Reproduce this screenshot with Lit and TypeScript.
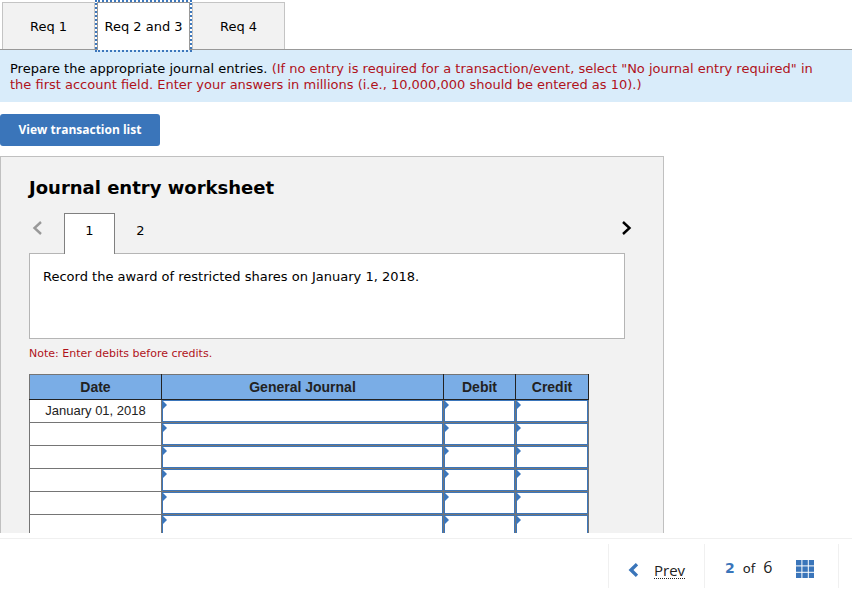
import { LitElement, html, css, svg } from "lit";
import { customElement, state } from "lit/decorators.js";

const dates = ["January 01, 2018", "", "", "", "", "", ""];
const entryColumns = ["General Journal", "Debit", "Credit"];

@customElement("journal-table")
class JournalTable extends LitElement {
  static styles = css`
    :host { display: block; }
    table {
      width: 100%;
      border-collapse: collapse;
      table-layout: fixed;
      background: #fff;
      font: 13px/16px "Liberation Sans", Arial, sans-serif;
      color: #222;
    }
    th, td { padding: 0; border: 1px solid #757575; text-align: center; }
    th {
      height: 24px;
      background: #7aade6;
      border-color: #222;
      border-top-color: #757575;
      font-size: 14px;
    }
    th:first-child { border-left-color: #757575; }
    td { height: 22px; }
    .date { width: 132px; }
    .amount { width: 72px; }
    .credit { width: 73px; }
    .cell { position: relative; height: 22px; }
    .cell::before {
      content: "";
      position: absolute;
      left: 1px;
      top: 1px;
      border: 4px solid transparent;
      border-left-color: #3b76bb;
      border-right-width: 0;
    }
    input {
      display: block;
      box-sizing: border-box;
      width: 100%;
      height: 22px;
      margin: 0;
      padding: 0 6px;
      border: 1px solid #3b76bb;
      border-radius: 0;
      background: #fff;
      font: inherit;
    }
  `;
  render() {
    return html`<table>
      <colgroup><col class="date" /><col /><col class="amount" /><col class="credit" /></colgroup>
      <thead><tr><th scope="col">Date</th>${entryColumns.map((c) => html`<th scope="col">${c}</th>`)}</tr></thead>
      <tbody>
        ${dates.map((date, i) => html`<tr>
          <td>${date}</td>
          ${entryColumns.map((c) => html`<td><div class="cell"><input type="text" aria-label="${c}, row ${i + 1}" /></div></td>`)}
        </tr>`)}
      </tbody>
    </table>`;
  }
}

@customElement("app-root")
class AppRoot extends LitElement {
  @state() tab = 1;
  @state() entry = 1;

  static styles = css`
    :host {
      display: flex;
      flex-direction: column;
      height: 100vh;
      background: #fff;
      color: #000;
      font: 13px/16px Verdana, "DejaVu Sans", sans-serif;
    }
    button { margin: 0; padding: 0; border: 0; background: none; font: inherit; color: inherit; }
    h1, p { margin: 0; }
    .work { flex: 1; min-height: 0; overflow: hidden; }
    .tabs { display: flex; gap: 2px; padding: 2px 2px 0; border-bottom: 1px solid #999; }
    .tab {
      width: 93px;
      height: 47px;
      padding-top: 2px;
      border: 1px solid #c4c4c4;
      border-bottom: 0;
      background: #f2f2f2;
      white-space: nowrap;
    }
    .tab.on {
      position: relative;
      height: 48px;
      margin-bottom: -1px;
      padding-top: 0;
      border-color: #999;
      background: #fff;
      outline: 2px dotted #3b76bb;
    }
    .banner { padding: 11px 20px 9px 10px; background: #d9ecfa; }
    .red { color: #b0121b; }
    .list {
      display: block;
      width: 160px;
      height: 32px;
      margin: 12px 0 10px;
      border-radius: 3px;
      background: #3a75ba;
      color: #fff;
      font: bold 12px/16px "Open Sans", sans-serif;
    }
    .sheet {
      box-sizing: border-box;
      max-width: 664px;
      padding: 20px 28px;
      border: 1px solid #c0c0c0;
      background: #f2f2f2;
    }
    h1 { font-size: 18px; line-height: 22px; }
    .pages { display: flex; align-items: flex-start; margin-top: 14px; }
    .arrow { width: 16px; height: 30px; }
    .arrow svg { display: block; margin: auto; }
    .page { box-sizing: border-box; width: 51px; height: 40px; padding-bottom: 5px; }
    .page.first { margin-left: 19px; }
    .page.on {
      position: relative;
      height: 41px;
      margin-bottom: -1px;
      padding-bottom: 6px;
      border: 1px solid #808080;
      border-bottom: 0;
      background: #fff;
    }
    .next { margin-left: auto; }
    .text {
      box-sizing: border-box;
      max-width: 596px;
      min-height: 86px;
      padding: 15px 13px;
      border: 1px solid #b5b5b5;
      background: #fff;
    }
    .note { margin: 7px 0 12px; font-size: 11px; }
    journal-table { max-width: 560px; }
    .foot {
      display: flex;
      justify-content: flex-end;
      margin-top: 5px;
      padding: 5px 13px 6px 0;
      border-top: 1px solid #f0f0f0;
      color: #222;
    }
    .box {
      display: flex;
      align-items: center;
      box-sizing: border-box;
      height: 44px;
      border-left: 1px solid #f0f0f0;
    }
    .prevbox { width: 96px; padding: 8px 0 0 19px; }
    .countbox { width: 135px; padding: 2px 0 0 20px; border-right: 1px solid #f0f0f0; }
    .prev { display: flex; align-items: center; gap: 16px; color: inherit; text-decoration: none; }
    .prev span { border-bottom: 1px dotted #222; font: 15px/16px "Open Sans", sans-serif; }
    .count { display: flex; align-items: baseline; gap: 8px; }
    .count b { color: #3a75ba; font-size: 14px; }
    .count i { font: 16px/20px "Open Sans", sans-serif; }
    .grid { margin: 4px 0 0 24px; }
    .grid svg { display: block; }
  `;

  chevron(path: string, color: string) {
    return html`<svg width="10" height="14" viewBox="0 0 10 14" aria-hidden="true">
      <path d=${path} fill="none" stroke=${color} stroke-width="2.4" />
    </svg>`;
  }

  render() {
    return html`
      <main class="work">
        <div class="tabs" role="tablist">
          ${["Req 1", "Req 2 and 3", "Req 4"].map((t, i) => html`<button
            class="tab ${this.tab === i ? "on" : ""}" role="tab" aria-selected=${this.tab === i}
            @click=${() => (this.tab = i)}>${t}</button>`)}
        </div>
        <p class="banner">Prepare the appropriate journal entries. <span class="red">(If no entry is required for a transaction/event, select "No journal entry required" in the first account field. Enter your answers in millions (i.e., 10,000,000 should be entered as 10).)</span></p>
        <button class="list">View transaction list</button>
        <section class="sheet">
          <h1>Journal entry worksheet</h1>
          <nav class="pages">
            <button class="arrow" aria-label="Previous entry">${this.chevron("M9 1 L2.5 7 L9 13", "#999")}</button>
            ${[1, 2].map((n) => html`<button class="page ${n === 1 ? "first" : ""} ${this.entry === n ? "on" : ""}"
              @click=${() => (this.entry = n)}>${n}</button>`)}
            <button class="arrow next" aria-label="Next entry">${this.chevron("M1 1 L7.5 7 L1 13", "#000")}</button>
          </nav>
          <p class="text">Record the award of restricted shares on January 1, 2018.</p>
          <p class="note red">Note: Enter debits before credits.</p>
          <journal-table></journal-table>
        </section>
      </main>
      <footer class="foot">
        <div class="box prevbox">
          <a class="prev" href="#prev">
            <svg width="10" height="14" viewBox="0 0 10 14" aria-hidden="true">
              <path d="M9 1.2 L3 7 L9 12.8" fill="none" stroke="#3a75ba" stroke-width="3.4" />
            </svg>
            <span>Prev</span>
          </a>
        </div>
        <div class="box countbox">
          <div class="count"><b>2</b> <span>of</span> <i>6</i></div>
          <button class="grid" aria-label="All questions">
            <svg width="18" height="18" viewBox="0 0 18 18" aria-hidden="true">
              ${[0, 1, 2].map((r) => [0, 1, 2].map((c) => svg`<rect x=${c * 6.4} y=${r * 6.4} width="5.4" height="5.4" fill="#3a75ba" />`))}
            </svg>
          </button>
        </div>
      </footer>
    `;
  }
}
